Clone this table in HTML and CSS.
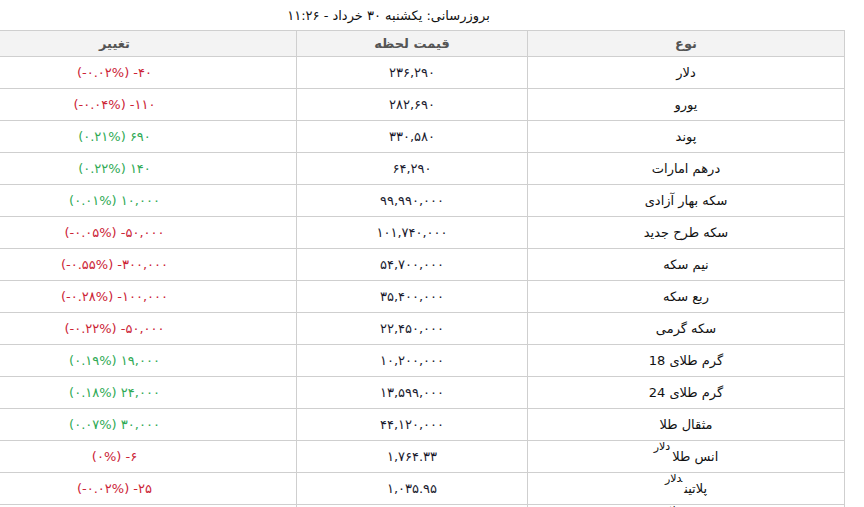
FILE: index.html
```html
<!DOCTYPE html>
<html lang="fa" dir="rtl">
<head>
<meta charset="utf-8">
<title>قیمت لحظه‌ای</title>
<link rel="stylesheet" href="styles.css">
</head>
<body>
<div class="wrap">
  <table class="rates">
    <caption class="updated">بروزرسانی: یکشنبه ۳۰ خرداد - ۱۱:۲۶</caption>
    <colgroup>
      <col class="c-name">
      <col class="c-price">
      <col class="c-change">
    </colgroup>
    <thead>
      <tr><th>نوع</th><th>قیمت لحظه</th><th>تغییر</th></tr>
    </thead>
    <tbody>
      <tr><td>دلار</td><td class="num">۲۳۶,۲۹۰</td><td><span class="chg down">(-۰.۰۲%) -۴۰</span></td></tr>
      <tr><td>یورو</td><td class="num">۲۸۲,۶۹۰</td><td><span class="chg down">(-۰.۰۴%) -۱۱۰</span></td></tr>
      <tr><td>پوند</td><td class="num">۳۳۰,۵۸۰</td><td><span class="chg up">(۰.۲۱%) ۶۹۰</span></td></tr>
      <tr><td>درهم امارات</td><td class="num">۶۴,۲۹۰</td><td><span class="chg up">(۰.۲۲%) ۱۴۰</span></td></tr>
      <tr><td>سکه بهار آزادی</td><td class="num">۹۹,۹۹۰,۰۰۰</td><td><span class="chg up">(۰.۰۱%) ۱۰,۰۰۰</span></td></tr>
      <tr><td>سکه طرح جدید</td><td class="num">۱۰۱,۷۴۰,۰۰۰</td><td><span class="chg down">(-۰.۰۵%) -۵۰,۰۰۰</span></td></tr>
      <tr><td>نیم سکه</td><td class="num">۵۴,۷۰۰,۰۰۰</td><td><span class="chg down">(-۰.۵۵%) -۳۰۰,۰۰۰</span></td></tr>
      <tr><td>ربع سکه</td><td class="num">۳۵,۴۰۰,۰۰۰</td><td><span class="chg down">(-۰.۲۸%) -۱۰۰,۰۰۰</span></td></tr>
      <tr><td>سکه گرمی</td><td class="num">۲۲,۴۵۰,۰۰۰</td><td><span class="chg down">(-۰.۲۲%) -۵۰,۰۰۰</span></td></tr>
      <tr><td>گرم طلای 18</td><td class="num">۱۰,۲۰۰,۰۰۰</td><td><span class="chg up">(۰.۱۹%) ۱۹,۰۰۰</span></td></tr>
      <tr><td>گرم طلای 24</td><td class="num">۱۳,۵۹۹,۰۰۰</td><td><span class="chg up">(۰.۱۸%) ۲۴,۰۰۰</span></td></tr>
      <tr><td>مثقال طلا</td><td class="num">۴۴,۱۲۰,۰۰۰</td><td><span class="chg up">(۰.۰۷%) ۳۰,۰۰۰</span></td></tr>
      <tr><td>انس طلا<sup>دلار</sup></td><td class="num">۱,۷۶۴.۳۳</td><td><span class="chg down">(۰%) -۶</span></td></tr>
      <tr><td>پلاتین<sup>دلار</sup></td><td class="num">۱,۰۳۵.۹۵</td><td><span class="chg down">(-۰.۰۲%) -۲۵</span></td></tr>
      <tr><td>نقره<sup>دلار</sup></td><td class="num">۲۲.۴۱</td><td><span class="chg down">(-۰.۳۱%) -۰.۰۷</span></td></tr>
    </tbody>
  </table>
</div>
</body>
</html>
```

FILE: styles.css
```css
html, body {
  margin: 0;
  padding: 0;
  background: #fff;
}

body {
  font-family: "DejaVu Sans", sans-serif;
  font-size: 13px;
  color: #111;
  direction: rtl;
}

.wrap {
  margin-right: 19px;
  overflow: hidden;
}

.rates {
  width: 912px;
  border-collapse: collapse;
  table-layout: fixed;
}

.updated {
  height: 30px;
  line-height: 32px;
  text-align: center;
  color: #111;
}

.c-name { width: 317px; }
.c-price { width: 231px; }
.c-change { width: 364px; }

.rates th,
.rates td {
  border: 1px solid #cfcfcf;
  padding: 0;
  text-align: center;
  white-space: nowrap;
}

.rates th {
  background: #f3f3f3;
  color: #555;
  font-weight: bold;
  line-height: 25px;
}

.rates td {
  line-height: 31px;
}

.rates sup {
  font-size: 11px;
  line-height: 0;
  vertical-align: 11px;
  margin-right: 2px;
}

.num {
  color: #1a1a2e;
}

.chg {
  direction: ltr;
  unicode-bidi: isolate;
}

.down { color: #cc2436; }
.up { color: #2faa55; }
```
